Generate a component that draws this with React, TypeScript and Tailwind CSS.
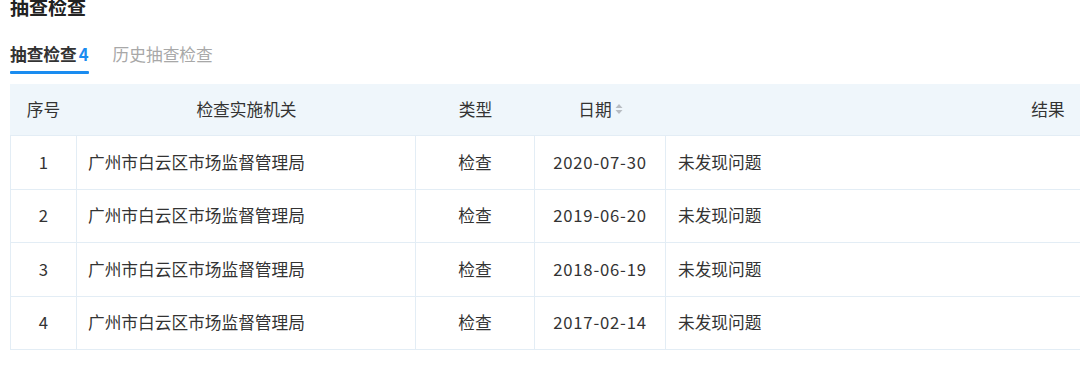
import React from "react";

const rows = [
  { n: "1", org: "广州市白云区市场监督管理局", type: "检查", date: "2020-07-30", res: "未发现问题" },
  { n: "2", org: "广州市白云区市场监督管理局", type: "检查", date: "2019-06-20", res: "未发现问题" },
  { n: "3", org: "广州市白云区市场监督管理局", type: "检查", date: "2018-06-19", res: "未发现问题" },
  { n: "4", org: "广州市白云区市场监督管理局", type: "检查", date: "2017-02-14", res: "未发现问题" },
];

export default function App() {
  return (
    <div
      className="w-[1080px] h-[370px] overflow-hidden bg-white text-[#333]"
      style={{ fontFamily: '"Noto Sans CJK SC", "Noto Sans", sans-serif' }}
    >
      <div className="pl-[10px] -mt-[6px] h-[26px] text-[19px] leading-[26px] font-bold text-[#222]">抽查检查</div>
      <div className="pl-[10px] mt-[22px] flex gap-[24px] text-[16.7px] leading-[24px]">
        <div className="flex flex-col">
          <div className="font-bold text-[#333]">
            抽查检查<span className="ml-[2px] text-[#1a8cf0]">4</span>
          </div>
          <div className="mt-[5px] h-[3px] bg-[#1a8cf0] rounded-[1px]" />
        </div>
        <div className="text-[#a8a8a8]">历史抽查检查</div>
      </div>
      <div className="ml-[10px] mt-[10px] w-[1420px] text-[16.7px]">
        <div className="flex h-[52px] items-center bg-[#eff6fb] border-b border-[#e3edf5]">
          <div className="w-[67px] text-center">序号</div>
          <div className="w-[339px] text-center">检查实施机关</div>
          <div className="w-[119px] text-center">类型</div>
          <div className="w-[131px] flex items-center justify-center gap-[3px]">
            <span>日期</span>
            <svg width="8" height="12" viewBox="0 0 8 12">
              <path d="M4 1 L7.5 5 L0.5 5 Z" fill="#b8bcc2" />
              <path d="M4 11 L7.5 7 L0.5 7 Z" fill="#b8bcc2" />
            </svg>
          </div>
          <div className="flex-1 text-center">结果</div>
        </div>
        {rows.map((r) => (
          <div key={r.n} className="flex h-[53.5px] border-b border-l border-[#e3edf5]">
            <div className="w-[66px] flex items-center justify-center border-r border-[#e3edf5]">{r.n}</div>
            <div className="w-[339px] flex items-center pl-[11px] border-r border-[#e3edf5]">{r.org}</div>
            <div className="w-[119px] flex items-center justify-center border-r border-[#e3edf5]">{r.type}</div>
            <div className="w-[131px] flex items-center justify-center border-r border-[#e3edf5] tracking-[0.8px]">{r.date}</div>
            <div className="flex-1 flex items-center pl-[12px]">{r.res}</div>
          </div>
        ))}
      </div>
    </div>
  );
}
